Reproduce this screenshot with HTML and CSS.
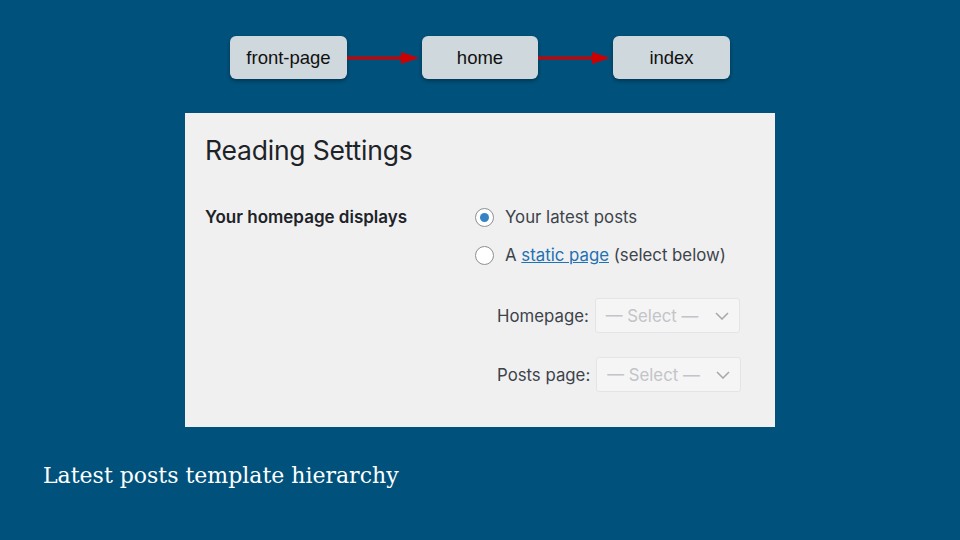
FILE: index.html
```html
<!DOCTYPE html>
<html>
<head>
<meta charset="utf-8">
<link rel="stylesheet" href="styles.css">
</head>
<body>
<div class="slide">
  <div class="flow">
    <div class="node">front-page</div>
    <svg class="arrow" width="75" height="14" viewBox="0 0 75 14"><line x1="0" y1="7" x2="56" y2="7" stroke="#cc0000" stroke-width="3"/><polygon points="54,1 72,7 54,13" fill="#cc0000"/></svg>
    <div class="node">home</div>
    <svg class="arrow" width="75" height="14" viewBox="0 0 75 14"><line x1="0" y1="7" x2="56" y2="7" stroke="#cc0000" stroke-width="3"/><polygon points="54,1 72,7 54,13" fill="#cc0000"/></svg>
    <div class="node">index</div>
  </div>
  <div class="panel">
    <h1 class="title">Reading Settings</h1>
    <div class="row">
      <div class="label">Your homepage displays</div>
      <div class="options">
        <div class="opt"><span class="radio checked"></span>Your latest posts</div>
        <div class="opt"><span class="radio"></span>A&nbsp;<a class="link">static page</a>&nbsp;(select below)</div>
        <div class="sel-row first"><span class="sel-label">Homepage:</span><span class="select">— Select —<svg class="chev" width="14" height="8" viewBox="0 0 14 8"><polyline points="1,1 7,7 13,1" fill="none" stroke="#a7aaad" stroke-width="1.6"/></svg></span></div>
        <div class="sel-row"><span class="sel-label">Posts page:</span><span class="select">— Select —<svg class="chev" width="14" height="8" viewBox="0 0 14 8"><polyline points="1,1 7,7 13,1" fill="none" stroke="#a7aaad" stroke-width="1.6"/></svg></span></div>
      </div>
    </div>
  </div>
  <div class="caption">Latest posts template hierarchy</div>
</div>
</body>
</html>
```
FILE: styles.css
```css
html, body { margin: 0; padding: 0; }
body { background: #00527c; }
.slide {
  width: 960px; height: 540px; background: #00527c;
  display: flex; flex-direction: column; align-items: flex-start;
  font-family: Inter, "Noto Sans", sans-serif;
}
.flow {
  display: flex; align-items: center;
  margin: 36px 0 0 230px;
}
.node {
  width: 117px; height: 43px; box-sizing: border-box;
  background: #cfd8dc; border-radius: 6px;
  box-shadow: 0 2px 4px rgba(0,0,0,0.35);
  display: flex; align-items: center; justify-content: center;
  font-family: "Liberation Sans", Arial, sans-serif; font-size: 18.5px; color: #111;
  padding-top: 1px;
}
.arrow { display: block; margin: 0; }
.flow .node:nth-child(3) { width: 116px; }
.panel {
  margin: 34px 0 0 185px;
  width: 590px; height: 314px; box-sizing: border-box;
  background: #f0f0f1; padding: 20px 20px 0 20px;
  color: #1d2327;
}
.title {
  margin: 0; font-size: 26.5px; font-weight: 400; line-height: 34px;
  letter-spacing: -0.2px; color: #1d2327;
}
.row { display: flex; margin-top: 39px; }
.label { width: 270px; font-weight: 600; font-size: 17px; line-height: 22px; color: #1d2327; }
.options { display: flex; flex-direction: column; font-size: 16.8px; color: #3c434a; }
.opt { display: flex; align-items: center; height: 22px; margin-bottom: 16px; }
.radio {
  width: 19px; height: 19px; box-sizing: border-box; border-radius: 50%;
  border: 1px solid #8c8f94; background: #fff; margin-right: 11px; position: relative;
}
.radio.checked::after {
  content: ""; position: absolute; left: 4px; top: 4px; width: 9px; height: 9px;
  border-radius: 50%; background: #3582c4;
}
.link { color: #2271b1; text-decoration: underline; }
.sel-row { display: flex; align-items: center; margin-left: 22px; height: 35px; }
.sel-row.first { margin-top: 16px; margin-bottom: 24px; }
.sel-label { margin-right: 6px; color: #3c434a; }
.select {
  width: 145px; height: 35px; box-sizing: border-box;
  border: 1px solid #e2e4e7; border-radius: 3px; background: #f5f5f6;
  display: flex; align-items: center; justify-content: space-between;
  padding: 0 10px 0 10px; color: #c3c4c7; font-size: 16.8px;
}
.caption {
  margin: 36px 0 0 43px;
  font-family: "DejaVu Serif", serif; font-size: 22px; color: #fff;
}
```
